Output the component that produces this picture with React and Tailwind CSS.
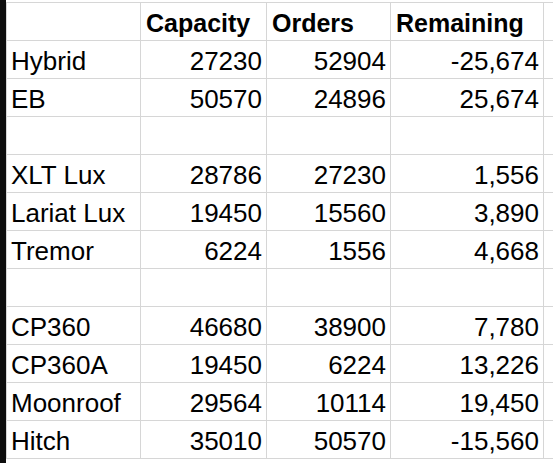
const rows = [
  ["Hybrid", "27230", "52904", "-25,674"],
  ["EB", "50570", "24896", "25,674"],
  null,
  ["XLT Lux", "28786", "27230", "1,556"],
  ["Lariat Lux", "19450", "15560", "3,890"],
  ["Tremor", "6224", "1556", "4,668"],
  null,
  ["CP360", "46680", "38900", "7,780"],
  ["CP360A", "19450", "6224", "13,226"],
  ["Moonroof", "29564", "10114", "19,450"],
  ["Hitch", "35010", "50570", "-15,560"],
];

const cell = "h-[38px] border-l border-t border-[#d6d6d6] flex items-end pb-[4px] leading-[26px]";

export default function App() {
  return (
    <div
      className="flex w-[553px] h-[463px] bg-white text-black overflow-hidden"
      style={{ fontFamily: '"Liberation Sans", Arial, sans-serif' }}
    >
      <div className="w-[6px] bg-[#0d0d0d] shrink-0" />
      <div className="flex-1 pt-[2px]">
        <div className="grid grid-cols-[134px_126px_124px_153px_1fr] border-b border-[#d6d6d6]">
          <div className={cell} />
          <div className={`${cell} pl-[5px] text-[25px] font-bold`}>Capacity</div>
          <div className={`${cell} pl-[5px] text-[25px] font-bold`}>Orders</div>
          <div className={`${cell} pl-[5px] text-[25px] font-bold`}>Remaining</div>
          <div className={cell} />
          {rows.map((r, i) =>
            r ? (
              <div key={i} className="contents">
                <div className={`${cell} pl-[4px] text-[26px]`}>{r[0]}</div>
                <div className={`${cell} justify-end pr-[4px] text-[26px]`}>{r[1]}</div>
                <div className={`${cell} justify-end pr-[4px] text-[26px]`}>{r[2]}</div>
                <div className={`${cell} justify-end pr-[4px] text-[26px]`}>{r[3]}</div>
                <div className={cell} />
              </div>
            ) : (
              <div key={i} className="contents">
                <div className={cell} />
                <div className={cell} />
                <div className={cell} />
                <div className={cell} />
                <div className={cell} />
              </div>
            )
          )}
        </div>
      </div>
    </div>
  );
}
